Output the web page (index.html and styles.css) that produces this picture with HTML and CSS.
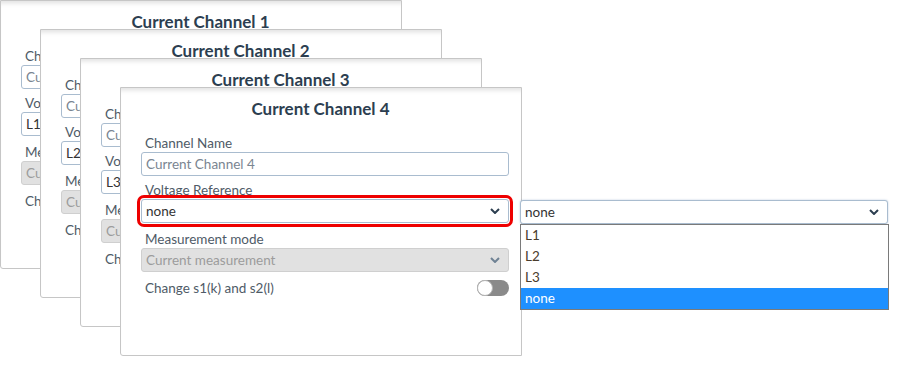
FILE: index.html
```html
<!DOCTYPE html>
<html lang="en">
<head>
  <meta charset="UTF-8">
  <meta name="viewport" content="width=device-width, initial-scale=1.0">
  <title>Current Channels</title>
  <link rel="stylesheet" href="styles.css">
</head>
<body>
  <div class="desk">

    <div class="card card-1">
      <h2 class="card-title">Current Channel 1</h2>
      <div class="field">
        <label class="field-label">Channel Name</label>
        <div class="input">Current Channel 1</div>
      </div>
      <div class="field">
        <label class="field-label">Voltage Reference</label>
        <div class="select"><span class="value">L1</span><svg class="chevron" viewBox="0 0 10 6"><path d="M1 1l4 4 4-4"/></svg></div>
      </div>
      <div class="field field-mode">
        <label class="field-label">Measurement mode</label>
        <div class="select disabled"><span>Current measurement</span><svg class="chevron" viewBox="0 0 10 6"><path d="M1 1l4 4 4-4"/></svg></div>
      </div>
      <div class="switch-row">
        <span>Change s1(k) and s2(l)</span>
        <span class="toggle"><span class="knob"></span></span>
      </div>
    </div>

    <div class="card card-2">
      <h2 class="card-title">Current Channel 2</h2>
      <div class="field">
        <label class="field-label">Channel Name</label>
        <div class="input">Current Channel 2</div>
      </div>
      <div class="field">
        <label class="field-label">Voltage Reference</label>
        <div class="select"><span class="value">L2</span><svg class="chevron" viewBox="0 0 10 6"><path d="M1 1l4 4 4-4"/></svg></div>
      </div>
      <div class="field field-mode">
        <label class="field-label">Measurement mode</label>
        <div class="select disabled"><span>Current measurement</span><svg class="chevron" viewBox="0 0 10 6"><path d="M1 1l4 4 4-4"/></svg></div>
      </div>
      <div class="switch-row">
        <span>Change s1(k) and s2(l)</span>
        <span class="toggle"><span class="knob"></span></span>
      </div>
    </div>

    <div class="card card-3">
      <h2 class="card-title">Current Channel 3</h2>
      <div class="field">
        <label class="field-label">Channel Name</label>
        <div class="input">Current Channel 3</div>
      </div>
      <div class="field">
        <label class="field-label">Voltage Reference</label>
        <div class="select"><span class="value">L3</span><svg class="chevron" viewBox="0 0 10 6"><path d="M1 1l4 4 4-4"/></svg></div>
      </div>
      <div class="field field-mode">
        <label class="field-label">Measurement mode</label>
        <div class="select disabled"><span>Current measurement</span><svg class="chevron" viewBox="0 0 10 6"><path d="M1 1l4 4 4-4"/></svg></div>
      </div>
      <div class="switch-row">
        <span>Change s1(k) and s2(l)</span>
        <span class="toggle"><span class="knob"></span></span>
      </div>
    </div>

    <div class="card card-4">
      <h2 class="card-title">Current Channel 4</h2>
      <div class="field">
        <label class="field-label">Channel Name</label>
        <div class="input">Current Channel 4</div>
      </div>
      <div class="field">
        <label class="field-label">Voltage Reference</label>
        <div class="select highlight"><span class="value">none</span><svg class="chevron" viewBox="0 0 10 6"><path d="M1 1l4 4 4-4"/></svg></div>
      </div>
      <div class="field field-mode">
        <label class="field-label">Measurement mode</label>
        <div class="select disabled"><span>Current measurement</span><svg class="chevron" viewBox="0 0 10 6"><path d="M1 1l4 4 4-4"/></svg></div>
      </div>
      <div class="switch-row">
        <span>Change s1(k) and s2(l)</span>
        <span class="toggle"><span class="knob"></span></span>
      </div>
    </div>

    <!-- open dropdown shown beside the highlighted select -->
    <div class="picker">
      <div class="select open"><span class="value">none</span><svg class="chevron" viewBox="0 0 10 6"><path d="M1 1l4 4 4-4"/></svg></div>
      <ul class="options">
        <li>L1</li>
        <li>L2</li>
        <li>L3</li>
        <li class="selected">none</li>
      </ul>
    </div>

  </div>
</body>
</html>
```

FILE: styles.css
```css
* {
  margin: 0;
  padding: 0;
  box-sizing: border-box;
}

body {
  font-family: Lato, "Open Sans", sans-serif;
  background-color: #fff;
  color: #4f5b67;
  font-size: 13.5px;
}

.desk {
  display: grid;
  width: 901px;
  height: 368px;
  overflow: hidden;
  align-items: start;
  justify-items: start;
}

.card {
  grid-area: 1 / 1;
  width: 402px;
  height: 269px;
  background-color: #fff;
  border: 1px solid #c6c6c6;
  border-radius: 0 0 0 3px;
  box-shadow: inset 0 6px 5px -4px rgba(0, 0, 0, 0.13);
  padding: 10px 12px 0 20px;
}

.card-1 { margin: 0 0 0 0; }
.card-2 { margin: 29px 0 0 40px; }
.card-3 { margin: 58px 0 0 80px; }
.card-4 { margin: 87px 0 0 120px; }

.card-title {
  font-size: 17px;
  font-weight: bold;
  line-height: 22px;
  color: #2c3e50;
  text-align: center;
  margin: 0 0 15px -9px;
}

.field {
  margin-top: 6px;
}

.card-title + .field {
  margin-top: 0;
}

.field-mode {
  margin-top: 8px;
}

.field-label {
  display: block;
  padding-left: 4px;
  line-height: 16px;
  margin-bottom: 1px;
  color: #4f5b67;
}

.input,
.select {
  width: 368px;
  height: 24px;
  border: 1px solid #a9bccf;
  border-radius: 3px;
  background-color: #fff;
  padding: 0 4px;
  display: flex;
  align-items: center;
  color: #7a8591;
}

.select {
  justify-content: space-between;
  padding-right: 8px;
}

.select .value {
  color: #333;
}

.chevron {
  width: 10px;
  height: 6px;
  fill: none;
  stroke: #2c3e50;
  stroke-width: 2;
}

.select.disabled {
  background-color: #e1e1e1;
  border-color: #cfcfcf;
  color: #9c9c9c;
}

.select.disabled .chevron {
  stroke: #6f8294;
}

.select.highlight {
  outline: 3px solid #ee0000;
  outline-offset: 1px;
}

.switch-row {
  margin-top: 7px;
  padding-left: 4px;
  display: flex;
  justify-content: space-between;
  align-items: center;
  width: 368px;
  height: 17px;
}

.toggle {
  display: flex;
  width: 32px;
  height: 16px;
  border-radius: 8px;
  background-color: #8a8a8a;
}

.knob {
  width: 16px;
  height: 16px;
  border-radius: 50%;
  background-color: #fff;
  border: 1px solid #b5b5b5;
}

.picker {
  grid-area: 1 / 1;
  margin: 200px 0 0 520px;
  width: 369px;
}

.select.open {
  width: 368px;
  box-shadow: 0 0 2px rgba(80, 120, 170, 0.4);
}

.options {
  list-style: none;
  border: 1px solid #7a7a7a;
  background-color: #fff;
  width: 369px;
}

.options li {
  height: 21px;
  line-height: 21px;
  padding-left: 4px;
  color: #4a3c2c;
}

.options li.selected {
  background-color: #1e90ff;
  color: #fff;
}
```
